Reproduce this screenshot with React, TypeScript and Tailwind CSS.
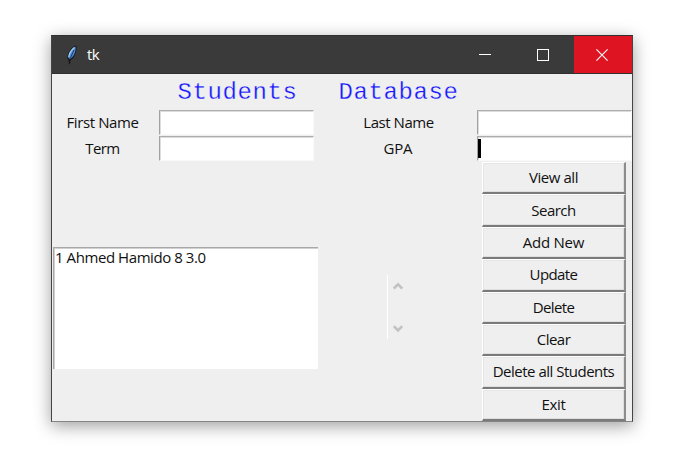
const actions = [
  { label: 'View all', text: 'tracking-[-0.45px]' },
  { label: 'Search', text: 'tracking-[-0.5px]' },
  { label: 'Add New', text: 'tracking-[-0.25px]' },
  { label: 'Update', text: 'tracking-[-0.6px]' },
  { label: 'Delete', text: 'tracking-[-0.6px]' },
  { label: 'Clear', text: 'tracking-[-0.5px]' },
  { label: 'Delete all Students', text: 'tracking-[-0.5px]' },
  { label: 'Exit', text: 'tracking-[-0.3px]' },
];

function Feather() {
  return (
    <svg width="12" height="20" viewBox="0 0 12 20">
      <path d="M10.3 0.5 C6 1.5 1.2 7 1.4 13 L2.6 15.5 L2.8 19.5 L4 19 L4.6 15.2 C8 13.5 11.5 6 10.3 0.5Z" fill="#15171b" />
      <path d="M9.4 1.4 C5.5 3.2 2.2 8 2.2 12.8 L4 14 C7.9 11.5 10.4 6 9.4 1.4Z" fill="#4c8bd4" />
      <path d="M8.5 2.5 C5.3 5 3.2 8.6 2.8 12" stroke="#a9cbea" strokeWidth="1.3" fill="none" />
      <path d="M8 5 L4.2 13.5" stroke="#17345f" strokeWidth="0.9" />
    </svg>
  );
}

function Entry({ cursor = false }: { cursor?: boolean }) {
  return (
    <div className="h-[25px] w-full border-b border-l border-r border-t border-b-[#f8f8f8] border-l-[#a2a2a2] border-r-[#fafafa] border-t-[#adadad] bg-white pt-px shadow-[inset_1px_1px_#dcdcdc]">
      {cursor && <div className="mt-px h-[19px] w-[3px] bg-black" />}
    </div>
  );
}

function Label({ children, text }: { children: string; text: string }) {
  return <div className={`text-center leading-[24px] ${text}`}>{children}</div>;
}

export default function App() {
  return (
    <div className="h-[457px] w-[683px] overflow-hidden bg-white pl-[51px] pt-[35px] font-['Open_Sans','Noto_Sans',sans-serif] text-[15px] text-[#111]">
      <div className="flex h-[387px] w-[582px] flex-col border border-b-[#858585] border-l-[#444] border-r-[#444] border-t-[#303030] bg-[#efefef] shadow-[0_4px_16px_rgba(0,0,0,0.38)]">
        <div className="flex h-[38px] shrink-0 items-center border-b border-[#303030] bg-[#3a3a3a] text-white">
          <div className="ml-[14px]"><Feather /></div>
          <span className="ml-[9px] tracking-[-0.5px]">tk</span>
          <div className="ml-auto flex h-full">
            <div className="flex w-[58px] items-center justify-center pr-[4px]">
              <div className="h-px w-[12px] bg-white" />
            </div>
            <div className="flex w-[58px] items-center justify-center pr-[4px]">
              <div className="h-[12px] w-[12px] border border-white" />
            </div>
            <div className="flex w-[58px] items-center justify-center bg-[#df1423] pr-[2px]">
              <svg width="12" height="12" viewBox="0 0 12 12" stroke="#fff" strokeWidth="1.1">
                <path d="M0.4 0.4L11.6 11.6M11.6 0.4L0.4 11.6" />
              </svg>
            </div>
          </div>
        </div>

        <div className="grid shrink-0 grid-cols-[107px_155px_163px_155px] grid-rows-[36px_26px_26px]">
          <div />
          <h1 className="pl-[2px] text-center font-['Liberation_Mono',monospace] text-[24px] leading-[38px] tracking-[0.6px] text-[#1414ff] [-webkit-text-stroke:0.3px_#efefef]">Students</h1>
          <h1 className="pl-[6px] text-center font-['Liberation_Mono',monospace] text-[24px] leading-[38px] tracking-[0.6px] text-[#1414ff] [-webkit-text-stroke:0.3px_#efefef]">Database</h1>
          <div />
          <div className="pr-[6px]"><Label text="tracking-[-0.4px]">First Name</Label></div>
          <Entry />
          <div className="pl-[6px]"><Label text="tracking-[-0.45px]">Last Name</Label></div>
          <Entry />
          <div className="pr-[6px]"><Label text="tracking-[-0.6px]">Term</Label></div>
          <Entry />
          <div className="pl-[5px]"><Label text="tracking-[-0.2px]">GPA</Label></div>
          <Entry cursor />
        </div>

        <div className="flex h-[260px]">
          <div className="ml-px mt-[85px] h-[122px] w-[265px] border-l border-t border-[#a8a8a8] bg-white pl-px leading-[18px] tracking-[-0.43px] shadow-[inset_1px_1px_#d0d0d0]">
            1 Ahmed Hamido 8 3.0
          </div>
          <div className="ml-[69px] mt-[113px] flex h-[64px] w-[20px] flex-col items-center justify-between border-l border-white py-[7px] pl-px">
            <svg width="10" height="8" viewBox="0 0 10 8" fill="none" stroke="#c2c2c2" strokeWidth="2.6">
              <path d="M0.8 6.5L5 2.3L9.2 6.5" />
            </svg>
            <svg width="10" height="8" viewBox="0 0 10 8" fill="none" stroke="#c2c2c2" strokeWidth="2.6">
              <path d="M0.8 2.2L5 6.4L9.2 2.2" />
            </svg>
          </div>
          <div className="ml-auto mr-[6px] flex w-[144px] flex-col">
            {actions.map(({ label, text }) => (
              <button
                key={label}
                className="min-h-0 w-full flex-1 border-b-2 border-l border-r-2 border-t border-b-[#7a7a7a] border-l-white border-r-[#8c8c8c] border-t-white bg-[#efefef] shadow-[inset_-1px_-1px_#dedede,inset_1px_1px_#e6e6e6]"
              >
                <span className={`block whitespace-nowrap leading-[29px] ${text}`}>{label}</span>
              </button>
            ))}
          </div>
        </div>
      </div>
    </div>
  );
}
